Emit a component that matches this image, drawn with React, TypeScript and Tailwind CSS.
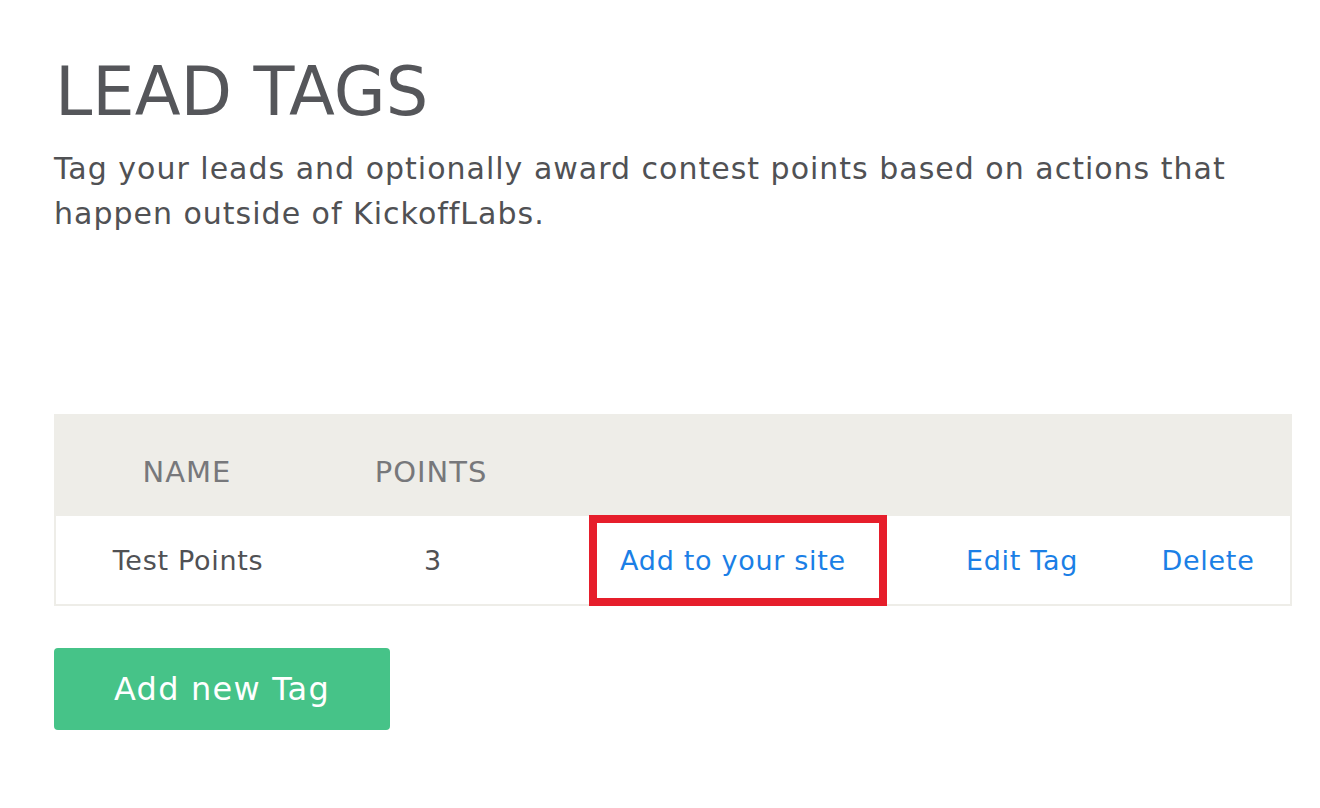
const FONT = "font-['DejaVu_Sans',Verdana,sans-serif]";

export default function App() {
  return (
    <div className={`min-h-[808px] bg-white ${FONT}`}>
      <div className="w-[1238px] ml-[54px] pt-[59px]">
        <h1 className="text-[67px] leading-none text-[#55565a] ml-[1px]">LEAD TAGS</h1>
        <p className="mt-[20px] text-[30px] leading-[45px] tracking-[1px] text-[#505154]">
          Tag your leads and optionally award contest points based on actions that happen outside of KickoffLabs.
        </p>

        <div className="mt-[178px]">
          {/* Header */}
          <div className="grid grid-cols-[266px_222px_378px_200px_172px] h-[102px] bg-[#eeede8] pt-[15px] items-center text-[29px] tracking-[1px] text-[#77787b]">
            <div className="text-center">NAME</div>
            <div className="text-center">POINTS</div>
            <div />
            <div />
            <div />
          </div>

          {/* Row */}
          <div className="grid grid-cols-[266px_222px_378px_200px_172px] h-[90px] items-center border-2 border-t-0 border-[#eeede8] text-[27px] tracking-[0.7px] pt-[2px]">
            <div className="text-center text-[#505154] -ml-[2px]">Test Points</div>
            <div className="text-center text-[#505154]">3</div>
            <div className="relative h-full flex items-center justify-center">
              <a href="#" className="text-[#1b7fe6]">Add to your site</a>
              <div className="absolute left-[45px] -top-[3px] w-[298px] h-[91px] border-[8px] border-[#e61e2b]" />
            </div>
            <a href="#" className="text-center text-[#1b7fe6]">Edit Tag</a>
            <a href="#" className="text-center text-[#1b7fe6]">Delete</a>
          </div>

          <button className="mt-[42px] w-[336px] h-[82px] rounded-[4px] bg-[#46c388] text-white text-[32px] tracking-[1.2px]">
            Add new Tag
          </button>
        </div>
      </div>
    </div>
  );
}
